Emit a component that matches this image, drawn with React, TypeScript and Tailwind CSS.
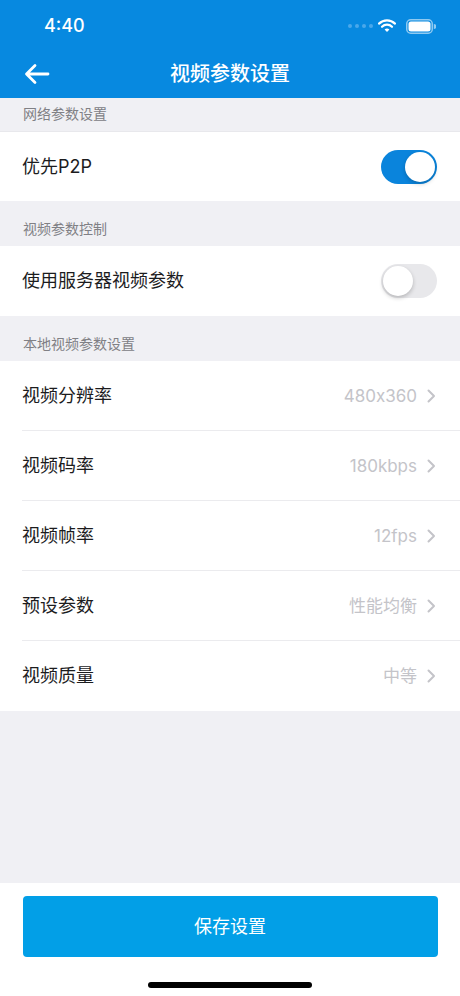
import React from "react";

const font = { fontFamily: '"Inter", "Noto Sans CJK SC", "Noto Sans", sans-serif' };

function Chevron() {
  return (
    <svg width="9" height="14" viewBox="0 0 9 14" className="ml-[10px]">
      <path d="M1.5 1.5 L7 7 L1.5 12.5" fill="none" stroke="#c4c4c9" strokeWidth="2" strokeLinecap="round" strokeLinejoin="round" />
    </svg>
  );
}

function Toggle({ on }: { on: boolean }) {
  return on ? (
    <div className="w-[56px] h-[34px] rounded-full bg-[#0a84dc] relative">
      <div className="absolute right-[2px] top-[2px] w-[30px] h-[30px] rounded-full bg-white shadow-[0_2px_4px_rgba(0,0,0,0.2)]" />
    </div>
  ) : (
    <div className="w-[56px] h-[34px] rounded-full bg-[#e8e8eb] relative">
      <div className="absolute left-[2px] top-[2px] w-[30px] h-[30px] rounded-full bg-white shadow-[0_2px_4px_rgba(0,0,0,0.22)]" />
    </div>
  );
}

function SectionHeader({ text, h }: { text: string; h: string }) {
  return (
    <div className={`${h} flex items-end px-[23px] pb-[7px] bg-[#f0f0f4]`}>
      <span className="text-[14px] leading-[20px] text-[#808085]">{text}</span>
    </div>
  );
}

function ValueRow({ label, value, last }: { label: string; value: string; last?: boolean }) {
  return (
    <div className="bg-white pl-[22px]">
      <div className={`h-[70px] flex items-center pr-[24px] ${last ? "" : "border-b border-[#ebebee]"}`}>
        <span className="flex-1 text-[18px] leading-[24px] text-[#1c1c1e]">{label}</span>
        <span className="text-[17px] leading-[24px] text-[#c4c4c9] [font-feature-settings:'calt'_0]">{value}</span>
        <Chevron />
      </div>
    </div>
  );
}

export default function App() {
  return (
    <div className="w-[460px] h-[996px] flex flex-col bg-[#f0f0f4] overflow-hidden" style={font}>
      <div className="bg-[#0789e0] h-[98px] flex flex-col">
        <div className="h-[50px] flex items-center pl-[44px] pr-[24px] pt-[2px]">
          <span className="text-white text-[18px] font-medium leading-[24px] flex-1">4:40</span>
          <div className="flex items-center gap-[3px] mr-[5px]">
            {[0, 1, 2, 3].map((i) => (
              <div key={i} className="w-[4px] h-[4px] rounded-full bg-[#4aa8ea]" />
            ))}
          </div>
          <svg width="18" height="14" viewBox="0 0 18 14" className="mr-[10px]">
            <path d="M1 4.6 A11.5 11.5 0 0 1 17 4.6" fill="none" stroke="white" strokeWidth="2.2" strokeLinecap="round" />
            <path d="M4 7.8 A7 7 0 0 1 14 7.8" fill="none" stroke="white" strokeWidth="2.2" strokeLinecap="round" />
            <path d="M9 13 L6.6 10.6 A3.4 3.4 0 0 1 11.4 10.6 Z" fill="white" />
          </svg>
          <svg width="30" height="15" viewBox="0 0 30 15">
            <rect x="0.75" y="0.75" width="25.5" height="13.5" rx="4" fill="none" stroke="rgba(255,255,255,0.55)" strokeWidth="1.5" />
            <rect x="2.5" y="2.5" width="22" height="10" rx="2.5" fill="white" />
            <path d="M27.8 5 A2 2 0 0 1 27.8 10 Z" fill="rgba(255,255,255,0.55)" />
          </svg>
        </div>
        <div className="h-[48px] flex items-center relative">
          <svg width="26" height="22" viewBox="0 0 26 22" className="ml-[24px]">
            <path d="M24 11 H3 M11 2.5 L2.5 11 L11 19.5" fill="none" stroke="white" strokeWidth="2.8" strokeLinecap="round" strokeLinejoin="round" />
          </svg>
          <span className="absolute left-0 right-0 text-center text-white text-[20px] font-medium leading-[28px] pointer-events-none">视频参数设置</span>
        </div>
      </div>

      <SectionHeader text="网络参数设置" h="h-[33px]" />
      <div className="bg-white h-[70px] flex items-center pl-[22px] pr-[23px] border-t border-[#e8e8ec]">
        <span className="flex-1 text-[18px] leading-[24px] text-[#1c1c1e]">优先P2P</span>
        <Toggle on />
      </div>

      <SectionHeader text="视频参数控制" h="h-[45px]" />
      <div className="bg-white h-[70px] flex items-center pl-[22px] pr-[23px]">
        <span className="flex-1 text-[18px] leading-[24px] text-[#1c1c1e]">使用服务器视频参数</span>
        <Toggle on={false} />
      </div>

      <SectionHeader text="本地视频参数设置" h="h-[45px]" />
      <ValueRow label="视频分辨率" value="480x360" />
      <ValueRow label="视频码率" value="180kbps" />
      <ValueRow label="视频帧率" value="12fps" />
      <ValueRow label="预设参数" value="性能均衡" />
      <ValueRow label="视频质量" value="中等" last />

      <div className="flex-1" />

      <div className="h-[113px] bg-white flex flex-col items-center">
        <button className="mt-[13px] w-[415px] h-[61px] rounded-[4px] bg-[#029fe7] text-white text-[18px] leading-[24px]">保存设置</button>
        <div className="mt-[25px] w-[164px] h-[6px] rounded-full bg-black" />
      </div>
    </div>
  );
}
